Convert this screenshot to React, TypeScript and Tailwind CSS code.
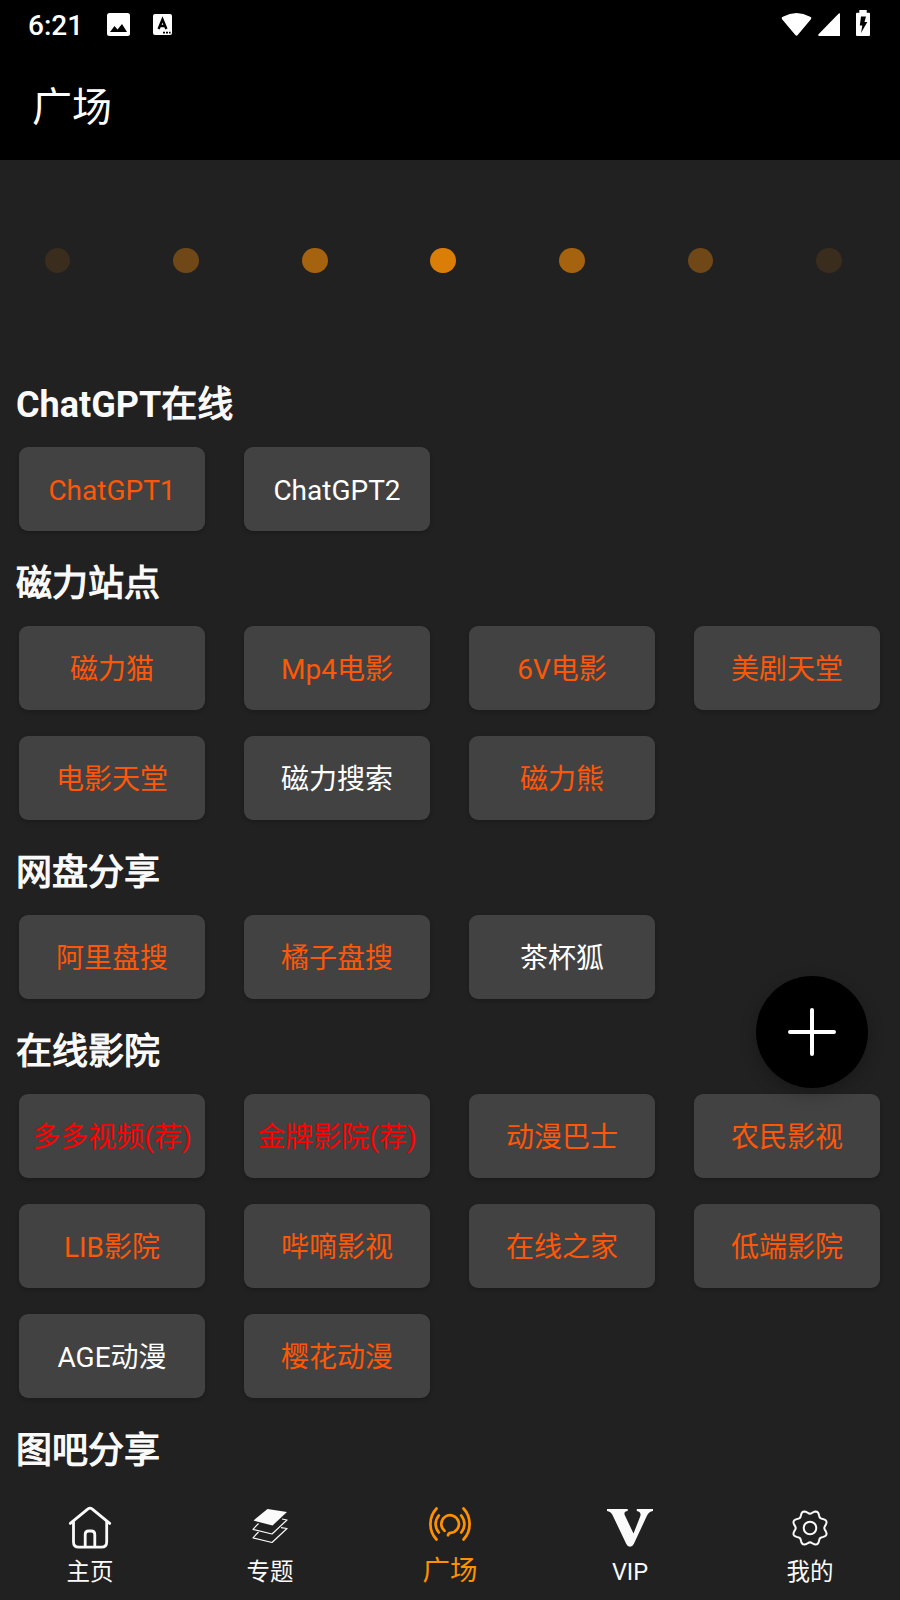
import React from 'react';

type Tone = 'orange' | 'white' | 'red';

interface Site {
  name: string;
  tone: Tone;
}

interface Section {
  latin?: string;
  title: string;
  sites: Site[];
}

const toneClass: Record<Tone, string> = {
  orange: 'text-[#ff5708]',
  white: 'text-white',
  red: 'text-[#ff0000]',
};

const sections: Section[] = [
  {
    latin: 'ChatGPT',
    title: '在线',
    sites: [
      { name: 'ChatGPT1', tone: 'orange' },
      { name: 'ChatGPT2', tone: 'white' },
    ],
  },
  {
    title: '磁力站点',
    sites: [
      { name: '磁力猫', tone: 'orange' },
      { name: 'Mp4电影', tone: 'orange' },
      { name: '6V电影', tone: 'orange' },
      { name: '美剧天堂', tone: 'orange' },
      { name: '电影天堂', tone: 'orange' },
      { name: '磁力搜索', tone: 'white' },
      { name: '磁力熊', tone: 'orange' },
    ],
  },
  {
    title: '网盘分享',
    sites: [
      { name: '阿里盘搜', tone: 'orange' },
      { name: '橘子盘搜', tone: 'orange' },
      { name: '茶杯狐', tone: 'white' },
    ],
  },
  {
    title: '在线影院',
    sites: [
      { name: '多多视频(荐)', tone: 'red' },
      { name: '金牌影院(荐)', tone: 'red' },
      { name: '动漫巴士', tone: 'orange' },
      { name: '农民影视', tone: 'orange' },
      { name: 'LIB影院', tone: 'orange' },
      { name: '哔嘀影视', tone: 'orange' },
      { name: '在线之家', tone: 'orange' },
      { name: '低端影院', tone: 'orange' },
      { name: 'AGE动漫', tone: 'white' },
      { name: '樱花动漫', tone: 'orange' },
    ],
  },
  { title: '图吧分享', sites: [] },
];

const dots = ['bg-[#3b2d1d]', 'bg-[#704817]', 'bg-[#a5620f]', 'bg-[#da7e07]', 'bg-[#a5620f]', 'bg-[#704817]', 'bg-[#3b2d1d]'];

const StatusBar: React.FC = () => (
  <div className="flex h-12 items-center pl-7 pr-[30px] text-white">
    <span className="w-[79px] pt-[3px] text-[28px] leading-12 font-medium">6:21</span>
    <svg width="23" height="23" viewBox="0 0 23 23" className="mr-[23px]">
      <rect width="23" height="23" rx="2.5" fill="#fff" />
      <path d="M3 19 L7.5 13 L10.5 16.5 L15 11 L20 19 Z" fill="#000" />
    </svg>
    <svg width="19" height="21" viewBox="0 0 19 21">
      <rect width="19" height="21" rx="2" fill="#fff" />
      <path d="M5.6 15 L9.5 5.5 L13.4 15 M7 12 H12" fill="none" stroke="#000" strokeWidth="2.4" />
      <path d="M10 18.6 h2 M13 18.6 h2 M16 18.6 h1.6" stroke="#000" strokeWidth="1.6" />
    </svg>
    <div className="ml-auto flex items-center">
      <svg width="31" height="25" viewBox="0 0 32 26" className="mr-1.5">
        <path d="M0.5 6 Q1 5.3 1.8 4.9 Q16 -2.8 30.2 4.9 Q31 5.3 31.5 6 L31 7.5 L17 24.3 Q16 25 15 24.3 L1 7.5 Z" fill="#fff" />
      </svg>
      <svg width="22" height="24" viewBox="0 0 22 24" className="mr-4">
        <path d="M22 1.5 V24 H1 Q0 23.5 0.3 22.5 L20.5 1.8 Q21.5 1 22 1.5 Z" fill="#fff" />
      </svg>
      <svg width="14" height="26" viewBox="0 0 14 26" className="-mt-0.5">
        <path d="M3.3 0 H10.7 V2.7 H13 Q14 2.7 14 3.7 V25 Q14 26 13 26 H1 Q0 26 0 25 V3.7 Q0 2.7 1 2.7 H3.3 Z" fill="#fff" />
        <path d="M5 6.5 H10 L8.5 12 H11.3 L5 23 L6.3 15.5 H3.8 Z" fill="#000" />
      </svg>
    </div>
  </div>
);

const HomeIcon = () => (
  <svg width="44" height="44" viewBox="0 0 44 44" fill="none" stroke="#fafafa" strokeWidth="2.8" strokeLinecap="round" strokeLinejoin="round">
    <path d="M2.3 17.4 L20 2.9 Q22 1.4 24 2.9 L41.7 17.4" />
    <path d="M5.5 16 V36 Q5.5 41.2 10.7 41.2 H33.5 Q38.7 41.2 38.7 36 V16" />
    <path d="M17.2 40.5 V28.5 Q17.2 25 20.7 25 H23.3 Q26.8 25 26.8 28.5 V40.5" />
  </svg>
);

const LayersIcon = () => (
  <svg width="36" height="36" viewBox="0 0 36 36" fill="none" stroke="#fafafa" strokeWidth="1.2" strokeLinejoin="round" className="mb-1">
    <path d="M15.5 1 L35 4 L20.5 17.5 L1.5 12.5 Z" fill="#fafafa" stroke="none" />
    <path d="M6.5 15.5 L1 21.3 L20 26 L35 12 L30 11" />
    <path d="M6.5 24 L1 29.8 L20 34.5 L35 20.5 L29 19.6" />
  </svg>
);

const SquareIcon = () => (
  <svg width="44" height="36" viewBox="0 0 44 36" fill="none" stroke="#ff9100" strokeWidth="2.7" strokeLinecap="round">
    <path d="M8.5 2.5 Q2.4 9 2.4 18 Q2.4 27 8.5 33.5" />
    <path d="M35.5 2.5 Q41.6 9 41.6 18 Q41.6 27 35.5 33.5" />
    <path d="M10.8 9.5 Q7.6 13.5 7.6 18 Q7.6 22.5 10.8 26.5" />
    <path d="M33.2 9.5 Q36.4 13.5 36.4 18 Q36.4 22.5 33.2 26.5" />
    <path d="M16.5 24.8 A8.8 8.8 0 1 1 22.5 26.8 Q20.5 27 20 29.3" />
  </svg>
);

const VipIcon = () => (
  <svg width="46" height="38" viewBox="0 0 46 38" fill="#fafafa">
    <path d="M0 0 H20.7 V2 Q16.5 2.5 17.7 6 L26.5 24.5 L33 8 Q35 3 29.8 2 V0 H46 V2 Q41.8 2.5 39.8 7 L26.8 35 Q25.5 37.7 23 37.7 Q20.5 37.7 19.3 35 L5.5 6 Q3.8 2.5 0 2 Z" />
  </svg>
);

// eight rounded lobes, one every 45 degrees
const gearPath = (() => {
  const steps = 96;
  let d = '';
  for (let i = 0; i < steps; i++) {
    const a = (i / steps) * Math.PI * 2;
    const r = 16 + 1.7 * Math.cos(8 * (a - Math.PI / 8));
    d += `${i === 0 ? 'M' : 'L'}${(19 + r * Math.cos(a)).toFixed(2)} ${(19 + r * Math.sin(a)).toFixed(2)}`;
  }
  return d + 'Z';
})();

const GearIcon = () => (
  <svg width="38" height="38" viewBox="0 0 38 38" fill="none" stroke="#fafafa" strokeWidth="2" strokeLinejoin="round">
    <path d={gearPath} />
    <circle cx="19" cy="19" r="6.3" />
  </svg>
);

const tabs = [
  { label: '主页', icon: <HomeIcon /> },
  { label: '专题', icon: <LayersIcon /> },
  { label: '广场', icon: <SquareIcon />, active: true },
  { label: 'VIP', icon: <VipIcon /> },
  { label: '我的', icon: <GearIcon /> },
];

const App: React.FC = () => (
  <div className="relative flex h-[1600px] w-[900px] flex-col overflow-hidden bg-[#212121] font-['Roboto','Noto_Sans_CJK_SC',sans-serif]">
    <header className="h-40 shrink-0 bg-black">
      <StatusBar />
      <h1 className="pl-8 text-[40px] leading-[120px] text-white">广场</h1>
    </header>

    <main className="min-h-0 flex-1 overflow-hidden">
      <div className="mb-1 grid h-[201px] grid-cols-7 items-center">
        {dots.map((color, i) => (
          <span key={i} className={`ml-[44.7px] size-[25.7px] rounded-full ${color}`} />
        ))}
      </div>

      {sections.map(section => (
        <section key={section.title}>
          <h2 className="h-[69px] pl-4 pt-2 text-[36px] leading-[64px] text-[#fafafa]">
            {section.latin && <span className="font-bold">{section.latin}</span>}
            <span className="[-webkit-text-stroke:1.2px_#fafafa]">{section.title}</span>
          </h2>
          <div className="grid grid-cols-4">
            {section.sites.map(site => (
              <button
                key={site.name}
                className={`mx-[19px] my-[13px] h-[84px] w-[186px] rounded-[9px] bg-[#424242] pt-1 text-[28px] whitespace-nowrap shadow-[0_2px_4px_rgba(0,0,0,0.2)] ${toneClass[site.tone]}`}
              >
                {site.name}
              </button>
            ))}
          </div>
        </section>
      ))}
    </main>

    <nav className="grid h-[110px] shrink-0 grid-cols-5 bg-[#212121]">
      {tabs.map(tab => (
        <div key={tab.label} className="flex flex-col items-center">
          <div className={`flex h-[76px] items-center justify-center ${tab.active ? 'pb-2' : ''}`}>{tab.icon}</div>
          <span className={tab.active ? '-mt-[9px] text-[27.5px] leading-7 text-[#ff9100]' : '-mt-2 text-[23.5px] leading-7 text-[#fafafa]'}>
            {tab.label}
          </span>
        </div>
      ))}
    </nav>

    <button aria-label="add" className="absolute top-[976px] left-[756px] flex size-28 items-center justify-center rounded-full bg-black shadow-[0_6px_16px_rgba(0,0,0,0.25)]">
      <svg width="48" height="48" viewBox="0 0 48 48" stroke="#fff" strokeWidth="4" strokeLinecap="round">
        <path d="M24 2 V46 M2 24 H46" />
      </svg>
    </button>
  </div>
);

export default App;
